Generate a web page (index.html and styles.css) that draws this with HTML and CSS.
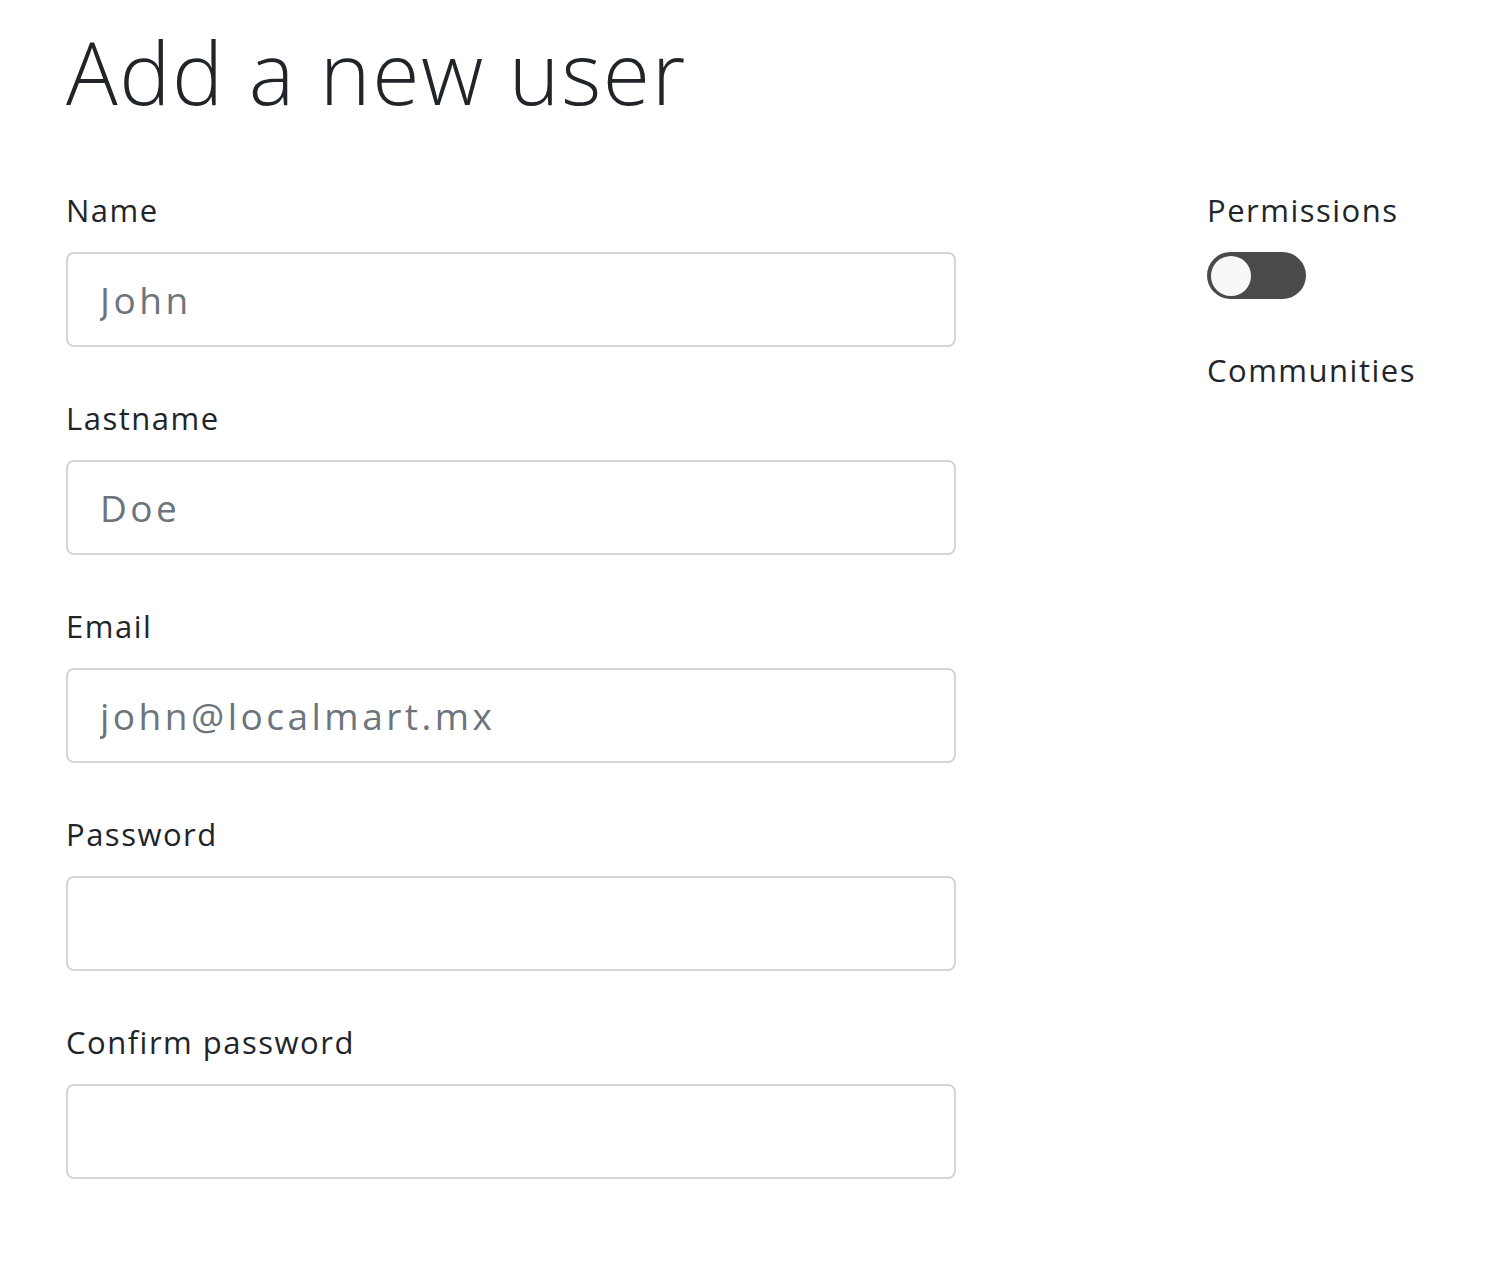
FILE: index.html
```html
<!DOCTYPE html>
<html lang="en">
<head>
<meta charset="utf-8">
<title>Add a new user</title>
<link rel="stylesheet" href="styles.css">
</head>
<body>
<main class="page">
  <h1 class="title">Add a new user</h1>
  <div class="layout">
    <form class="form">
      <div class="field">
        <label class="label" for="name">Name</label>
        <input class="input" id="name" type="text" placeholder="John">
      </div>
      <div class="field">
        <label class="label" for="lastname">Lastname</label>
        <input class="input" id="lastname" type="text" placeholder="Doe">
      </div>
      <div class="field">
        <label class="label" for="email">Email</label>
        <input class="input" id="email" type="email" placeholder="john@localmart.mx">
      </div>
      <div class="field">
        <label class="label" for="password">Password</label>
        <input class="input" id="password" type="password">
      </div>
      <div class="field">
        <label class="label" for="confirm">Confirm password</label>
        <input class="input" id="confirm" type="password">
      </div>
    </form>
    <aside class="side">
      <div class="side-group">
        <div class="label">Permissions</div>
        <span class="toggle"><span class="knob"></span></span>
      </div>
      <div class="side-group">
        <div class="label">Communities</div>
      </div>
    </aside>
  </div>
</main>
</body>
</html>
```

FILE: styles.css
```css
html, body {
  margin: 0;
  padding: 0;
  background: #ffffff;
}
body {
  font-family: "Open Sans", "DejaVu Sans", sans-serif;
  color: #212529;
}
.page {
  padding: 20px 0 0 66px;
}
.title {
  margin: 0;
  font-size: 86px;
  font-weight: 300;
  line-height: 1.2;
  letter-spacing: 1.6px;
}
.layout {
  display: grid;
  grid-template-columns: 890px auto;
  column-gap: 251px;
  margin-top: 64px;
}
.form {
  display: flex;
  flex-direction: column;
  gap: 48px;
}
.field {
  display: flex;
  flex-direction: column;
  gap: 19px;
}
.label {
  font-size: 31px;
  line-height: 46px;
  letter-spacing: 1.5px;
  color: #212529;
}
.input {
  box-sizing: border-box;
  height: 95px;
  width: 890px;
  border: 2px solid #d2d5d9;
  border-radius: 8px;
  padding: 0 32px;
  font-family: inherit;
  font-size: 37px;
  letter-spacing: 3.5px;
  color: #495057;
  background: #fff;
  outline: none;
}
.input::placeholder {
  color: #6c757d;
}
.side {
  display: flex;
  flex-direction: column;
  gap: 48px;
}
.side-group {
  display: flex;
  flex-direction: column;
  gap: 19px;
}
.toggle {
  display: flex;
  align-items: center;
  box-sizing: border-box;
  width: 99px;
  height: 47px;
  border-radius: 24px;
  background: #4a4a4a;
  padding: 0 4px;
}
.knob {
  width: 40px;
  height: 40px;
  border-radius: 50%;
  background: #f8f8f8;
}
```
